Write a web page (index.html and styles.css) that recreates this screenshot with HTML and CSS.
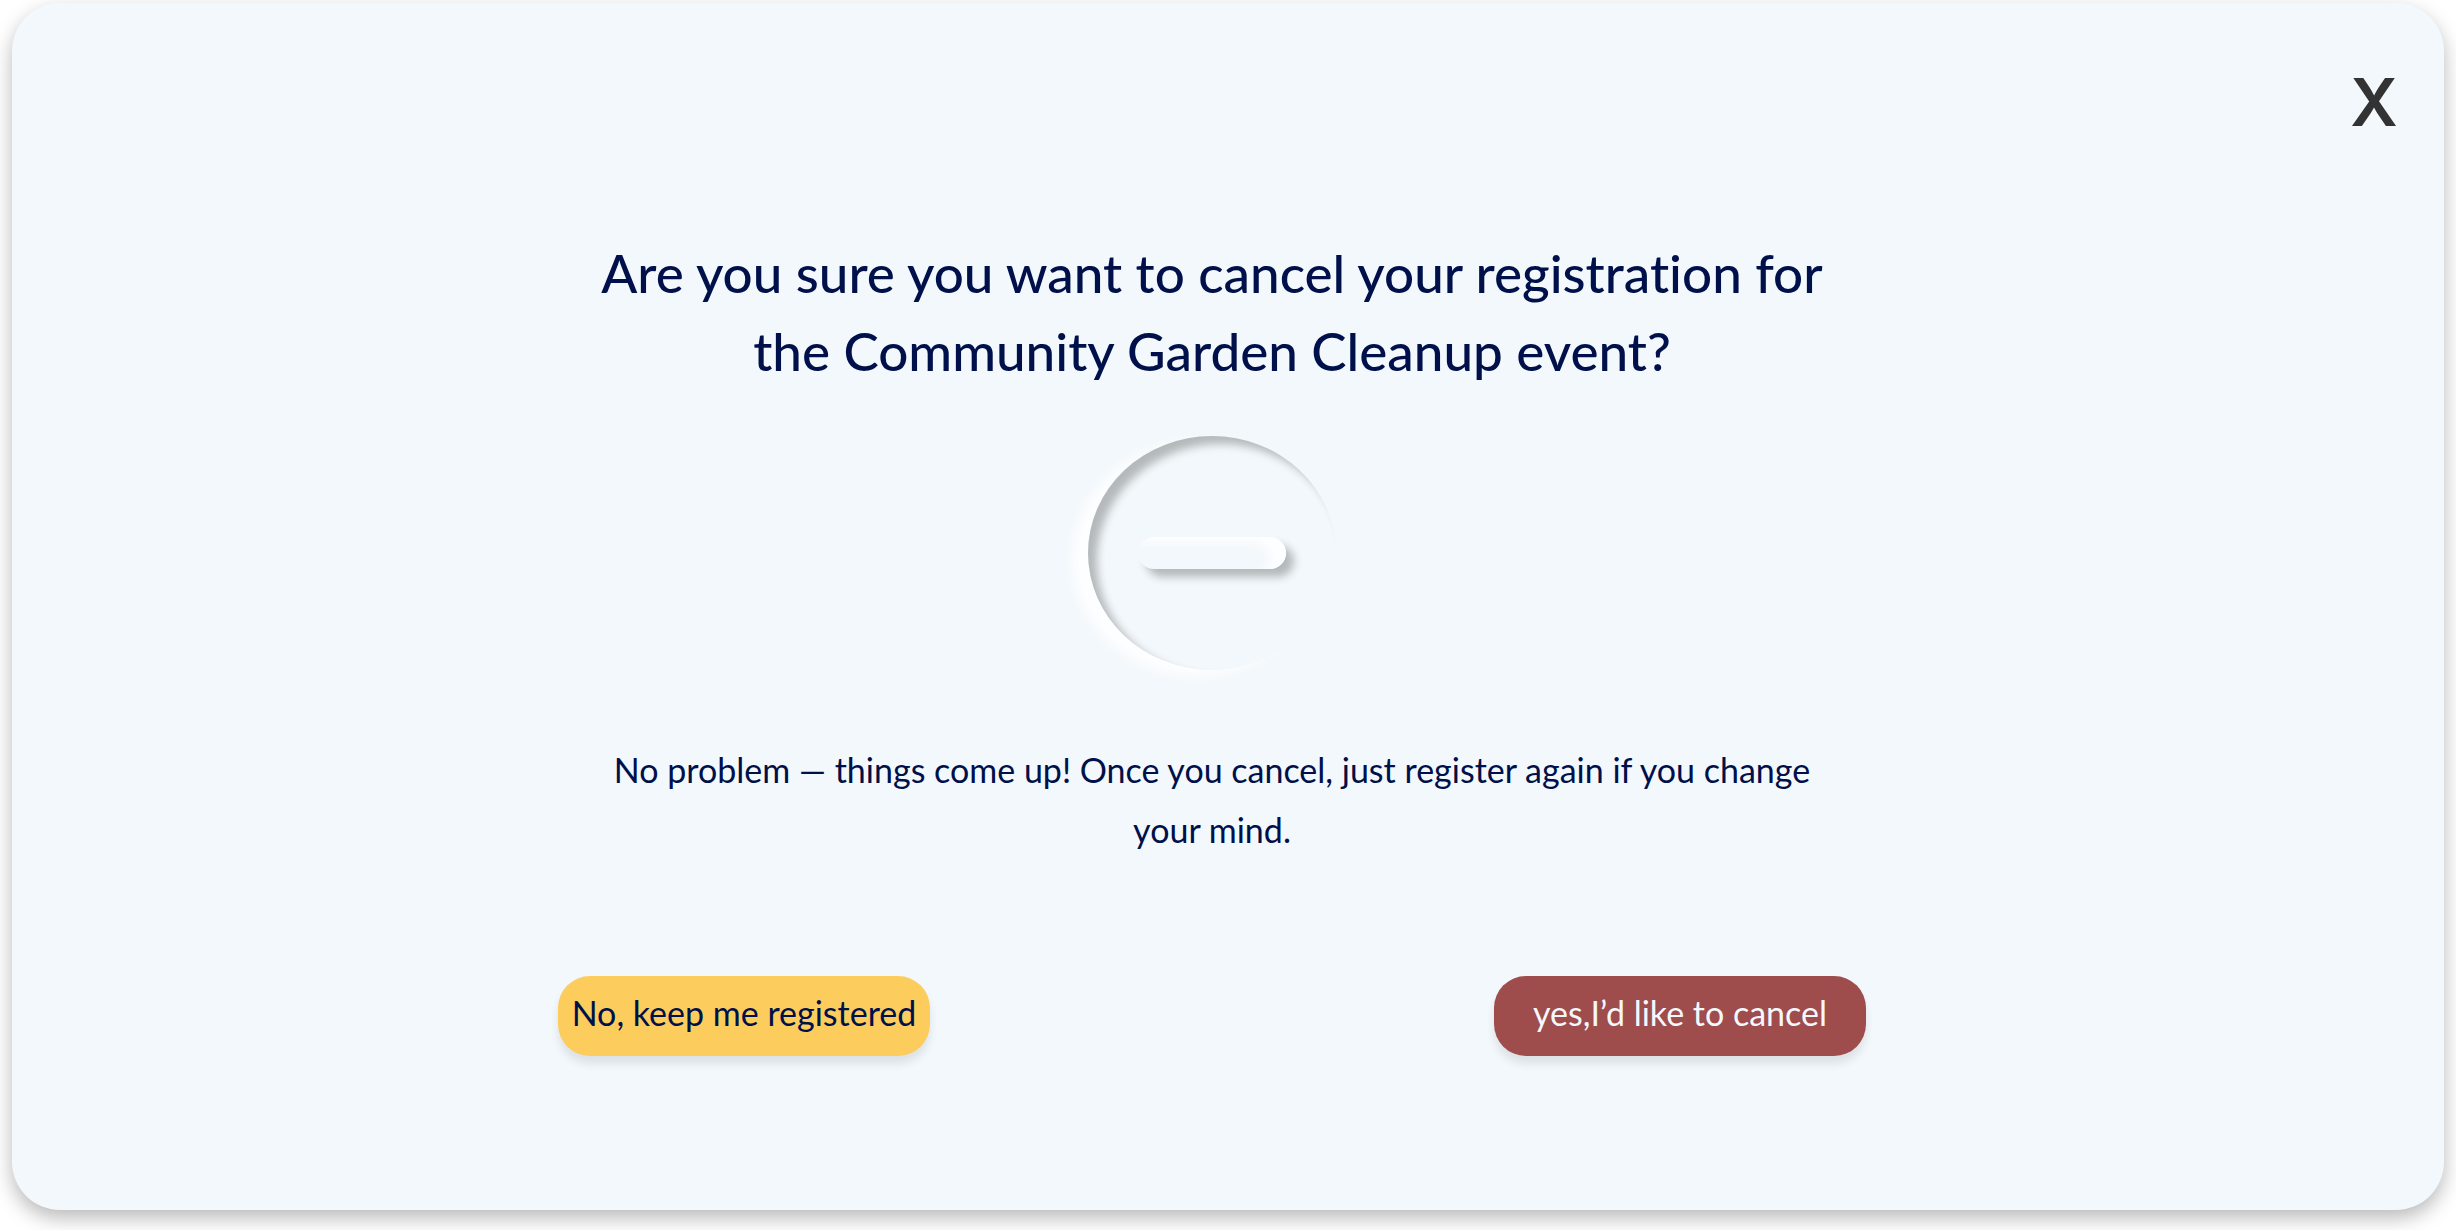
FILE: index.html
```html
<!DOCTYPE html>
<html lang="en">
<head>
<meta charset="utf-8">
<meta name="viewport" content="width=device-width, initial-scale=1">
<title>Cancel registration</title>
<link rel="stylesheet" href="styles.css">
</head>
<body>
<main class="dialog" role="dialog" aria-labelledby="dialog-title">
  <header class="dialog-header">
    <button class="close" type="button" aria-label="Close">X</button>
  </header>
  <div class="content">
    <h1 class="title" id="dialog-title">Are you sure you want to cancel your registration for the Community Garden Cleanup event?</h1>
    <div class="badge" aria-hidden="true"><span class="minus"></span></div>
    <p class="message">No problem — things come up! Once you cancel, just register again if you change your mind.</p>
    <div class="actions">
      <button class="button keep" type="button">No, keep me registered</button>
      <button class="button cancel" type="button">yes,I’d like to cancel</button>
    </div>
  </div>
</main>
</body>
</html>
```
FILE: styles.css
```css
* {
  box-sizing: border-box;
}

body {
  margin: 0;
  padding: 3px 12px 20px;
  background: #fff;
  color: #00104a;
  font-family: Lato, "Open Sans", sans-serif;
  font-variant-ligatures: none;
}

.dialog {
  padding: 61px 32px 154px 0;
  border-radius: 48px;
  background: #f3f8fc;
  box-shadow: 0 8px 20px rgba(0, 0, 0, 0.28);
}

.dialog-header {
  display: flex;
  justify-content: flex-end;
}

.close {
  width: 76px;
  height: 76px;
  padding: 0;
  border: 0;
  background: none;
  color: #333;
  font-family: Inter, sans-serif;
  font-size: 66px;
  font-weight: 600;
  line-height: 76px;
}

.content {
  display: flex;
  flex-direction: column;
  align-items: center;
  max-width: 1308px;
  margin: 0 auto;
  padding-top: 94px;
}

.title {
  max-width: 1280px;
  margin: 0;
  font-size: 53px;
  font-weight: 500;
  line-height: 78px;
  text-align: center;
}

.badge {
  display: flex;
  align-items: center;
  justify-content: center;
  width: 248px;
  height: 234px;
  margin-top: 46px;
  border-radius: 50%;
  box-shadow: inset 9px 8px 8px #b4b9bb, -16px 6px 12px #fdfeff;
}

.minus {
  width: 148px;
  height: 32px;
  border-radius: 16px;
  background: #f3f8fc;
  box-shadow: inset -16px 6px 10px #fdfeff, 8px 8px 8px #b4b9bb;
}

.message {
  max-width: 1240px;
  margin: 70px 0 0;
  font-size: 34px;
  line-height: 60px;
  text-align: center;
}

.actions {
  display: flex;
  justify-content: space-between;
  gap: 32px;
  width: 100%;
  margin-top: 116px;
}

.button {
  width: 372px;
  height: 80px;
  padding: 0 0 8px;
  border: 0;
  border-radius: 32px;
  box-shadow: 0 8px 8px rgba(0, 0, 0, 0.09);
  font-family: inherit;
  font-size: 34px;
  font-variant-ligatures: none;
  white-space: nowrap;
}

.keep {
  background: #fccd5c;
  color: #00104a;
}

.cancel {
  background: #9e4c4c;
  color: #f3f8fc;
}
```
